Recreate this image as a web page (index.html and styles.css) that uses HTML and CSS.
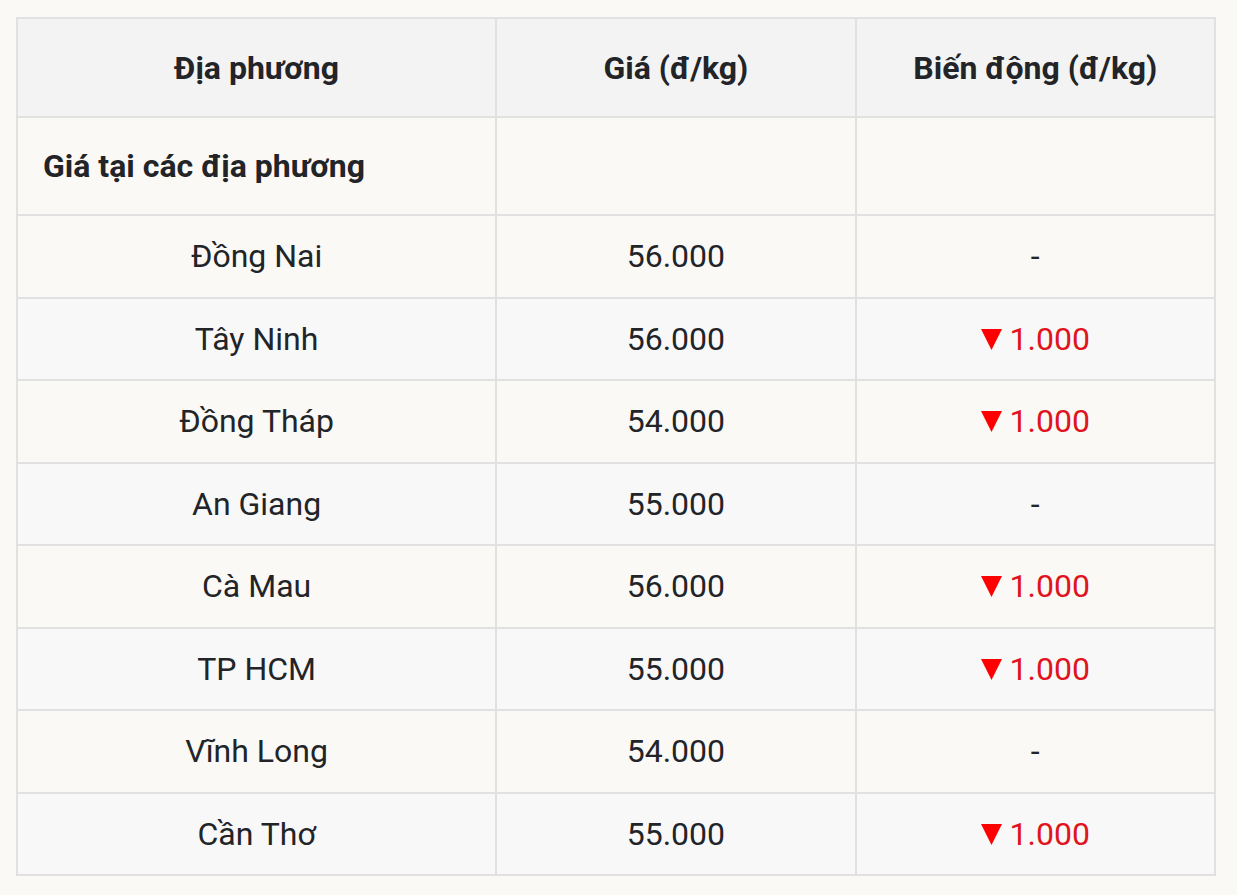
FILE: index.html
```html
<!DOCTYPE html>
<html lang="vi">
<head>
<meta charset="utf-8">
<title>Giá tại các địa phương</title>
<link rel="stylesheet" href="styles.css">
</head>
<body>
<div class="wrap">
<table class="price-table">
  <colgroup>
    <col class="c1"><col class="c2"><col class="c3">
  </colgroup>
  <thead>
    <tr><th>Địa phương</th><th>Giá (đ/kg)</th><th>Biến động (đ/kg)</th></tr>
  </thead>
  <tbody>
    <tr class="section"><td class="section-title">Giá tại các địa phương</td><td></td><td></td></tr>
    <tr><td>Đồng Nai</td><td>56.000</td><td>-</td></tr>
    <tr class="alt"><td>Tây Ninh</td><td>56.000</td><td class="down"><svg class="tri" viewBox="0 0 20 20" width="21" height="21"><polygon points="0,0 20,0 10,20" fill="#ff0000"/></svg>1.000</td></tr>
    <tr><td>Đồng Tháp</td><td>54.000</td><td class="down"><svg class="tri" viewBox="0 0 20 20" width="21" height="21"><polygon points="0,0 20,0 10,20" fill="#ff0000"/></svg>1.000</td></tr>
    <tr class="alt"><td>An Giang</td><td>55.000</td><td>-</td></tr>
    <tr><td>Cà Mau</td><td>56.000</td><td class="down"><svg class="tri" viewBox="0 0 20 20" width="21" height="21"><polygon points="0,0 20,0 10,20" fill="#ff0000"/></svg>1.000</td></tr>
    <tr class="alt"><td>TP HCM</td><td>55.000</td><td class="down"><svg class="tri" viewBox="0 0 20 20" width="21" height="21"><polygon points="0,0 20,0 10,20" fill="#ff0000"/></svg>1.000</td></tr>
    <tr><td>Vĩnh Long</td><td>54.000</td><td>-</td></tr>
    <tr class="alt"><td>Cần Thơ</td><td>55.000</td><td class="down"><svg class="tri" viewBox="0 0 20 20" width="21" height="21"><polygon points="0,0 20,0 10,20" fill="#ff0000"/></svg>1.000</td></tr>
  </tbody>
</table>
</div>
</body>
</html>
```

FILE: styles.css
```css
html, body {
  margin: 0;
  background: #faf9f6;
}
body {
  font-family: Roboto, "Liberation Sans", Arial, sans-serif;
  color: #222428;
}
.wrap {
  padding: 17px 0 0 16px;
}
.price-table {
  width: 1200px;
  border-collapse: collapse;
  table-layout: fixed;
  font-size: 32px;
}
.c1 { width: 40%; }
.c2 { width: 30%; }
.c3 { width: 30%; }
.price-table th,
.price-table td {
  border: 2px solid #e1e1e1;
  text-align: center;
  vertical-align: middle;
  padding: 0 10px;
  line-height: 38px;
}
.price-table th {
  background: #f3f3f4;
  font-weight: 700;
  height: 97px;
}
.price-table td {
  height: 80.5px;
  font-weight: 400;
}
.price-table tr.section td {
  height: 96px;
}
.price-table td.section-title {
  text-align: left;
  font-weight: 700;
  padding-left: 25px;
}
.price-table tr.alt td {
  background: #f8f8f8;
}
.down {
  color: #e0141e;
}
.tri {
  display: inline-block;
  vertical-align: 0;
  margin-right: 8px;
}
```
